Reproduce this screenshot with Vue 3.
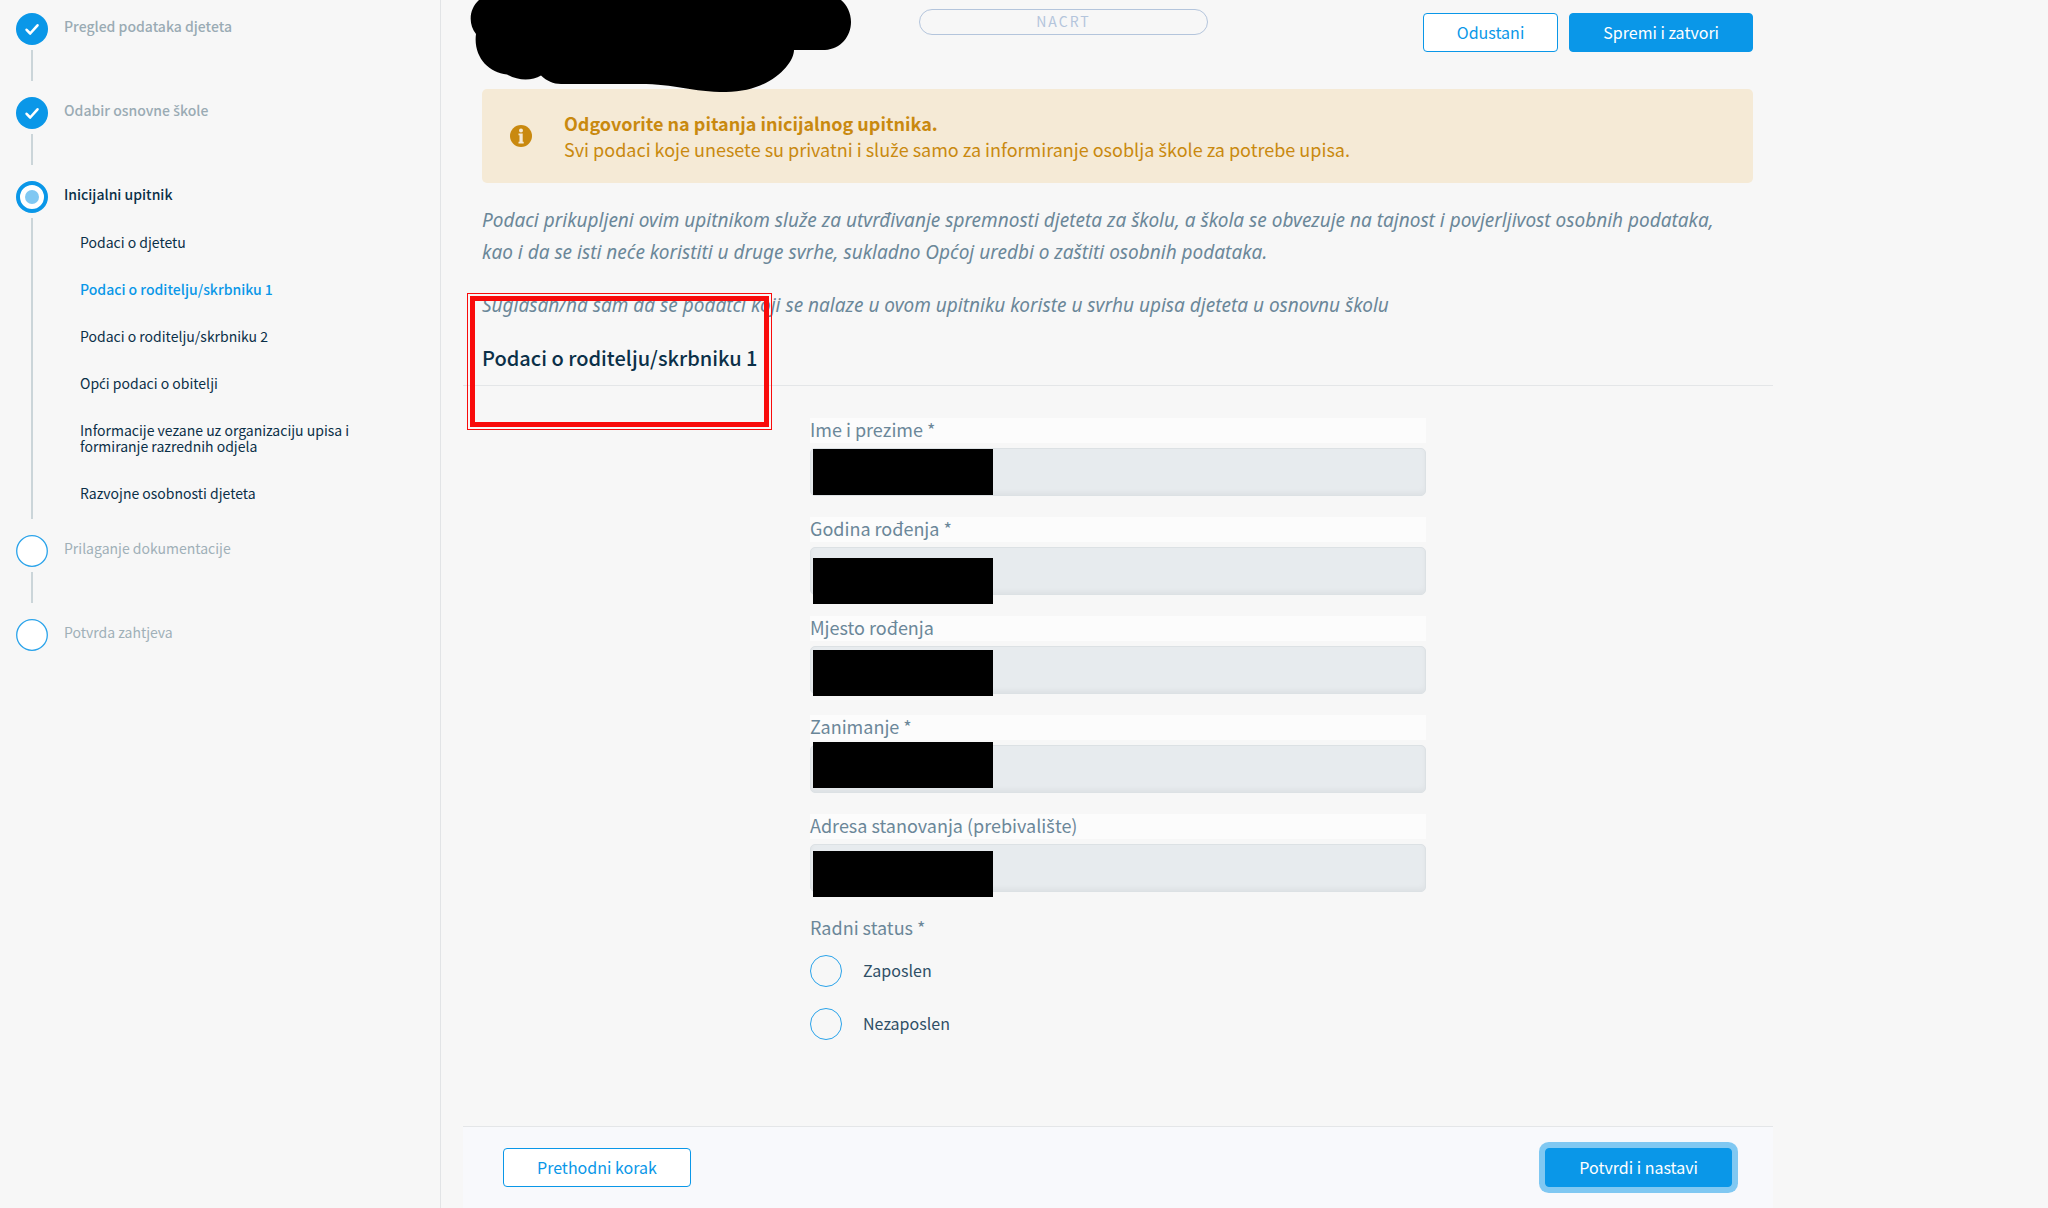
<template>
  <div class="page">
    <aside class="sidebar">
      <ol class="steps">
        <li v-for="step in steps" :key="step.title" class="step" :class="step.status">
          <div class="step-rail">
            <svg class="step-icon" viewBox="0 0 32 32" aria-hidden="true">
              <template v-if="step.status === 'done'">
                <circle cx="16" cy="16" r="16" fill="#0a97e8" />
                <path d="M10.6 16.8l3.6 3.7 7.3-8.2" fill="none" stroke="#fff" stroke-width="2.6" stroke-linecap="round" stroke-linejoin="round" />
              </template>
              <template v-else-if="step.status === 'active'">
                <circle cx="16" cy="16" r="14" fill="#fff" stroke="#0a97e8" stroke-width="4" />
                <circle cx="16" cy="16" r="7" fill="#80c8f2" />
              </template>
              <circle v-else cx="16" cy="16" r="15.3" fill="#fff" stroke="#2aa3ea" stroke-width="1.3" />
            </svg>
            <span class="step-line"></span>
          </div>
          <div class="step-body">
            <span class="step-title"><HrText :text="step.title" /></span>
            <ul v-if="step.children" class="substeps">
              <li v-for="child in step.children" :key="child">
                <a href="#" :class="{ current: child === currentSection }" @click.prevent="currentSection = child"><HrText :text="child" /></a>
              </li>
            </ul>
          </div>
        </li>
      </ol>
    </aside>

    <main class="main">
      <header class="header">
        <svg class="scribble" viewBox="0 0 382 93" aria-hidden="true">
          <path d="M9 0C-1 9-2 24 6 34C3 56 18 73 37 74.500C48 81 62 81 71 75.500C77 81 83 84 91 84H170C205 84 222 92 256 92C300 92 324 64 324 50H355C371 49 381 36 381 22C381 13 377 5 371 0Z" fill="#000" />
        </svg>
        <span class="status">NACRT</span>
        <div class="actions">
          <button type="button" class="btn btn-outline">Odustani</button>
          <button type="button" class="btn btn-primary">Spremi i zatvori</button>
        </div>
      </header>

      <div class="alert">
        <svg class="alert-icon" viewBox="0 0 22 22" aria-hidden="true">
          <circle cx="11" cy="11" r="11" fill="#c9890f" />
          <circle cx="11" cy="5.500" r="2" fill="#f5ead6" />
          <path d="M8.500 8.500h4.200v8.300h1v1.700H8.500v-1.700h1v-6.600h-1z" fill="#f5ead6" />
        </svg>
        <div>
          <strong>Odgovorite na pitanja inicijalnog upitnika.</strong>
          <div><HrText :text="alertText" /></div>
        </div>
      </div>

      <div class="intro">
        <p>Podaci prikupljeni ovim upitnikom služe za utvrđivanje spremnosti djeteta za školu, a škola se obvezuje na tajnost i povjerljivost osobnih podataka, kao i da se isti neće koristiti u druge svrhe, sukladno Općoj uredbi o zaštiti osobnih podataka.</p>
        <p>Suglasan/na sam da se podatci koji se nalaze u ovom upitniku koriste u svrhu upisa djeteta u osnovnu školu</p>
      </div>

      <div class="section-head">
        <h2>Podaci o roditelju/skrbniku 1</h2>
        <div class="marker"></div>
      </div>

      <form id="upitnik" class="form" @submit.prevent>
        <div v-for="field in fields" :key="field.id" class="field">
          <label :for="field.id"><HrText :text="field.label" /></label>
          <div class="control">
            <input :id="field.id" type="text" readonly>
            <span class="redacted" :style="{ top: field.cover + 'px' }"></span>
          </div>
        </div>

        <fieldset class="radios">
          <legend>Radni status *</legend>
          <label v-for="option in statusOptions" :key="option" class="radio">
            <input type="radio" name="radni-status" :value="option" v-model="workStatus">
            <span>{{ option }}</span>
          </label>
        </fieldset>
      </form>

      <footer class="footer">
        <button type="button" class="btn btn-outline">Prethodni korak</button>
        <button type="submit" form="upitnik" class="btn btn-primary focused">Potvrdi i nastavi</button>
      </footer>
    </main>
  </div>
</template>

<script setup>
import { h, ref } from 'vue';

const HrText = (props) =>
  props.text.split(/([ćšžĆŠŽ])/).map((part, i) => (i % 2 ? h('span', { class: 'hr-letter' }, part) : part));
HrText.props = ['text'];

const steps = [
  { title: 'Pregled podataka djeteta', status: 'done' },
  { title: 'Odabir osnovne škole', status: 'done' },
  {
    title: 'Inicijalni upitnik',
    status: 'active',
    children: [
      'Podaci o djetetu',
      'Podaci o roditelju/skrbniku 1',
      'Podaci o roditelju/skrbniku 2',
      'Opći podaci o obitelji',
      'Informacije vezane uz organizaciju upisa i formiranje razrednih odjela',
      'Razvojne osobnosti djeteta'
    ]
  },
  { title: 'Prilaganje dokumentacije', status: 'pending' },
  { title: 'Potvrda zahtjeva', status: 'pending' }
];

const currentSection = ref('Podaci o roditelju/skrbniku 1');

const alertText = 'Svi podaci koje unesete su privatni i služe samo za informiranje osoblja škole za potrebe upisa.';

const fields = [
  { id: 'ime', label: 'Ime i prezime *', cover: 1 },
  { id: 'godina', label: 'Godina rođenja *', cover: 11 },
  { id: 'mjesto', label: 'Mjesto rođenja', cover: 4 },
  { id: 'zanimanje', label: 'Zanimanje *', cover: -3 },
  { id: 'adresa', label: 'Adresa stanovanja (prebivalište)', cover: 7 }
];

const statusOptions = ['Zaposlen', 'Nezaposlen'];
const workStatus = ref(null);
</script>

<style>
body {
  background: #f7f7f7;
}

.hr-letter {
  font-family: "Noto Sans", sans-serif;
  line-height: 1;
}
</style>

<style scoped>
* {
  box-sizing: border-box;
}

.page {
  display: flex;
  min-height: 100vh;
  background: #f7f7f7;
  color: #0b3048;
  font-family: "Noto Sans CJK SC", "Noto Sans", sans-serif;
  font-size: 18px;
}

/* Sidebar */
.sidebar {
  flex: 0 0 441px;
  padding: 13px 16px;
  border-right: 1px solid #e2e4e6;
}

.steps,
.substeps {
  list-style: none;
  margin: 0;
  padding: 0;
}

.step {
  display: flex;
  gap: 16px;
  min-height: 84px;
  font-size: 14px;
  line-height: 16px;
}

.step-rail {
  display: flex;
  flex-direction: column;
  align-items: center;
  gap: 5px;
  padding-bottom: 16px;
}

.step-icon {
  width: 32px;
  height: 32px;
}

.step-line {
  flex: 1;
  width: 2px;
  background: #cbd5d9;
}

.step:last-child .step-line {
  display: none;
}

.step-body {
  padding-top: 5px;
}

.step-title {
  display: block;
  color: #a0b0b8;
}

.done .step-title {
  color: #9aabb4;
  font-weight: 500;
}

.active .step-title {
  color: #0b3048;
  font-weight: 500;
}

.substeps {
  display: flex;
  flex-direction: column;
  gap: 31px;
  padding: 32px 64px 34px 16px;
}

.substeps a {
  display: block;
  color: #0b3048;
  text-decoration: none;
}

.substeps a.current {
  color: #0a97e8;
  font-weight: 500;
}

/* Main column */
.main {
  display: flex;
  flex: 1;
  flex-direction: column;
  min-width: 0;
  max-width: 1310px;
  margin-left: 22px;
}

.header {
  position: relative;
  display: grid;
  grid-template-columns: 437fr 289fr 545fr;
  align-items: start;
  height: 89px;
  padding: 9px 20px 0 19px;
}

.scribble {
  position: absolute;
  top: 0;
  left: 7px;
  width: 382px;
  height: 93px;
}

.status {
  grid-column: 2;
  height: 26px;
  border: 1px solid #b4c5dc;
  border-radius: 13px;
  color: #b4c5dc;
  font-size: 14px;
  line-height: 22px;
  letter-spacing: 2px;
  text-align: center;
}

.actions {
  display: flex;
  justify-content: flex-end;
  gap: 11px;
  padding-top: 4px;
}

.btn {
  height: 39px;
  padding: 0 33px 2px;
  border: 1px solid #0a97e8;
  border-radius: 4px;
  font-family: inherit;
  font-size: 16px;
  line-height: 24px;
  white-space: nowrap;
  cursor: pointer;
}

.btn-outline {
  background: #fff;
  color: #0a97e8;
}

.btn-primary {
  background: #0a97e8;
  color: #fff;
}

.btn.focused {
  box-shadow: 0 0 0 6px #80c8f2;
}

.alert {
  display: flex;
  align-items: center;
  gap: 32px;
  margin: 0 20px 0 19px;
  padding: 21px 28px;
  border-radius: 5px;
  background: #f5ead6;
  color: #c9890f;
  line-height: 26px;
}

.alert-icon {
  flex: none;
  width: 22px;
  height: 22px;
}

.intro {
  padding: 0 48px 0 19px;
  color: #6b8799;
  font-family: "Noto Sans", sans-serif;
  font-size: 19px;
  font-style: italic;
  line-height: 32px;
}

.intro p {
  margin: 21px 0;
}

.section-head {
  position: relative;
  padding: 0 19px 11px;
  border-bottom: 1px solid #e4e6e8;
}

.section-head h2 {
  margin: 0;
  font-size: 20px;
  font-weight: 500;
  line-height: 32px;
}

/* Highlight drawn over the section title */
.marker {
  position: absolute;
  top: -49px;
  left: 4px;
  width: 305px;
  height: 137px;
  border: 1px solid #f90b0b;
  pointer-events: none;
}

.marker::before {
  content: "";
  position: absolute;
  inset: 2px;
  border: 5px solid #f90b0b;
}

/* Form */
.form {
  width: 100%;
  max-width: 616px;
  margin: 32px auto 0;
}

.field {
  margin-bottom: 21px;
}

.field label {
  display: block;
  margin-bottom: 5px;
  padding-bottom: 2px;
  background: #fcfcfc;
  color: #6b8799;
  line-height: 23px;
}

.control {
  position: relative;
}

.control input {
  display: block;
  width: 100%;
  height: 48px;
  padding: 0 16px;
  border: 1px solid #dce1e4;
  border-radius: 5px;
  outline: none;
  background: #e7ebee;
  box-shadow: inset 0 -3px 5px rgba(0, 0, 0, 0.04);
  color: #0b3048;
  font: inherit;
}

.redacted {
  position: absolute;
  left: 3px;
  width: 180px;
  height: 46px;
  background: #000;
}

.radios {
  display: flex;
  flex-direction: column;
  gap: 21px;
  margin: 0;
  padding: 0;
  border: 0;
}

.radios legend {
  margin-bottom: 15px;
  padding: 2px 0 0;
  color: #6b8799;
  line-height: 25px;
}

.radio {
  display: flex;
  align-items: center;
  gap: 21px;
  height: 32px;
  color: #2f4f66;
  font-size: 16px;
  line-height: 24px;
}

.radio span {
  padding-bottom: 2px;
}

.radio input {
  appearance: none;
  width: 32px;
  height: 32px;
  margin: 0;
  border: 1px solid #2aa3ea;
  border-radius: 50%;
}

.radio input:checked {
  border-width: 10px;
}

.footer {
  display: flex;
  justify-content: space-between;
  margin-top: auto;
  padding: 21px 41px 21px 40px;
  border-top: 1px solid #e4e6e8;
  background: #f8f9fc;
}
</style>
